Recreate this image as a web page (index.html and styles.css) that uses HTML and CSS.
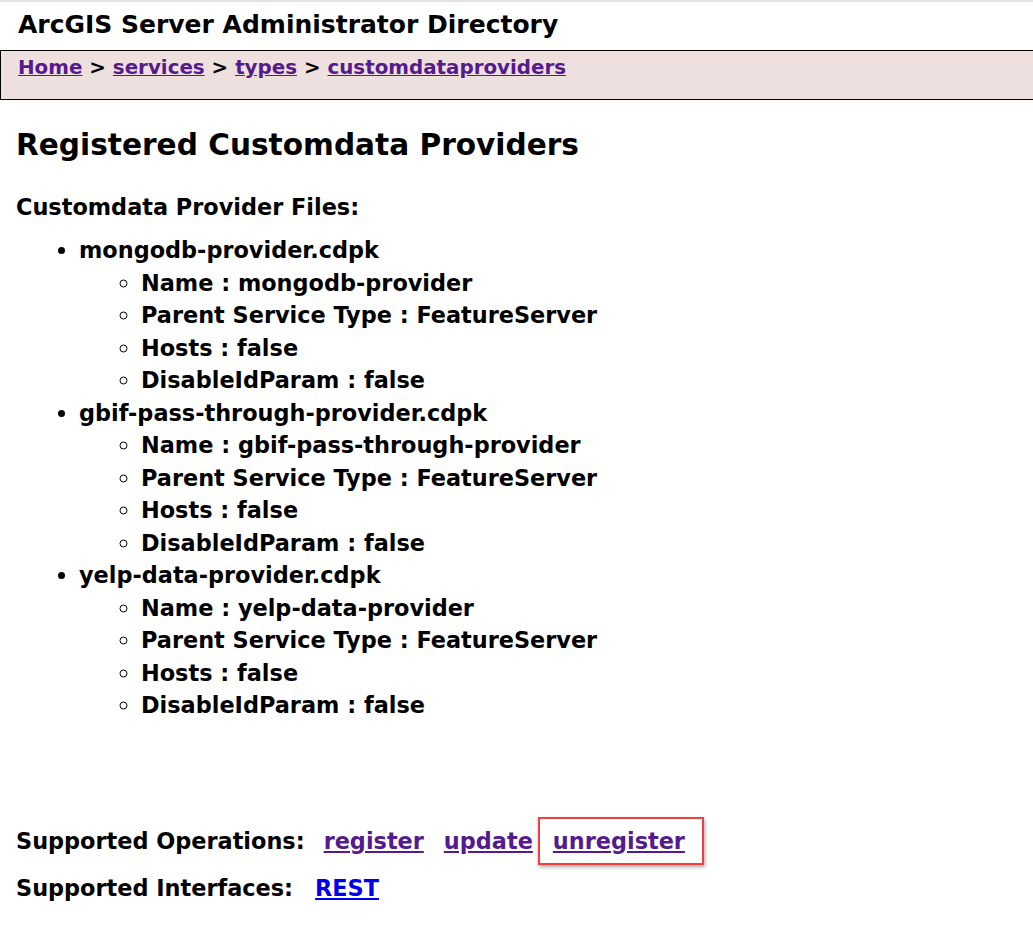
FILE: index.html
```html
<!DOCTYPE html>
<html>
<head>
<meta charset="utf-8">
<title>ArcGIS Server Administrator Directory</title>
<link rel="stylesheet" href="styles.css">
</head>
<body>
<div class="titlebar">ArcGIS Server Administrator Directory</div>
<div class="navbar"><a href="#">Home</a> &gt; <a href="#">services</a> &gt; <a href="#">types</a> &gt; <a href="#">customdataproviders</a></div>
<div class="content">
  <h2 class="heading">Registered Customdata Providers</h2>
  <div class="label">Customdata Provider Files:</div>
  <ul class="files">
    <li>mongodb-provider.cdpk
      <ul class="props">
        <li>Name : mongodb-provider</li>
        <li>Parent Service Type : FeatureServer</li>
        <li>Hosts : false</li>
        <li>DisableIdParam : false</li>
      </ul>
    </li>
    <li>gbif-pass-through-provider.cdpk
      <ul class="props">
        <li>Name : gbif-pass-through-provider</li>
        <li>Parent Service Type : FeatureServer</li>
        <li>Hosts : false</li>
        <li>DisableIdParam : false</li>
      </ul>
    </li>
    <li>yelp-data-provider.cdpk
      <ul class="props">
        <li>Name : yelp-data-provider</li>
        <li>Parent Service Type : FeatureServer</li>
        <li>Hosts : false</li>
        <li>DisableIdParam : false</li>
      </ul>
    </li>
  </ul>
  <div class="ops">
    <span class="oplabel">Supported Operations:</span>
    <a href="#" class="op op-first">register</a>
    <a href="#" class="op">update</a>
    <span class="highlight"><a href="#" class="op-hl">unregister</a></span>
  </div>
  <div class="ifaces">
    <span class="oplabel">Supported Interfaces:</span>
    <a href="#" class="rest">REST</a>
  </div>
</div>
</body>
</html>
```
FILE: styles.css
```css
html, body {
  margin: 0;
  padding: 0;
  background: #ffffff;
}
body {
  font-family: "DejaVu Sans", Verdana, sans-serif;
  font-weight: bold;
  color: #000;
  font-size: 22.4px;
}
a {
  color: #551a8b;
  text-decoration: underline;
}
.titlebar {
  border-top: 2px solid #e3e3e3;
  box-sizing: border-box;
  padding-left: 18px;
  font-size: 25px;
  line-height: 46px;
  border-bottom: 1px solid #000;
  height: 51px;
}
.navbar {
  background: #efe0e0;
  border-left: 1px solid #000;
  border-bottom: 1px solid #000;
  height: 48px;
  padding-left: 17px;
  line-height: 34px;
  font-size: 19.85px;
}
.content {
  padding-left: 16px;
}
.heading {
  font-size: 29.6px;
  margin: 0;
  padding-top: 25px;
  line-height: 40px;
}
.label {
  margin-top: 25px;
  line-height: 34px;
}
.files {
  margin: 10px 0 0 0;
  padding-left: 63px;
  list-style: disc;
  line-height: 32.5px;
}
.props {
  margin: 0;
  padding-left: 62px;
  list-style: circle;
}
.ops {
  display: flex;
  align-items: center;
  margin-top: 95px;
  height: 48px;
}
.op {
  margin-left: 20px;
}
.op-first {
  margin-left: 19px;
}
.highlight {
  display: flex;
  align-items: center;
  box-sizing: border-box;
  height: 48px;
  border: 2px solid #ef4040;
  box-shadow: 1px 2px 4px rgba(0,0,0,0.35);
  padding: 0 17px 0 13px;
  margin-left: 5px;
}
.ifaces {
  display: flex;
  align-items: center;
  margin-top: 6px;
  height: 34px;
}
.rest {
  color: #0000ee;
  margin-left: 22px;
}
```
